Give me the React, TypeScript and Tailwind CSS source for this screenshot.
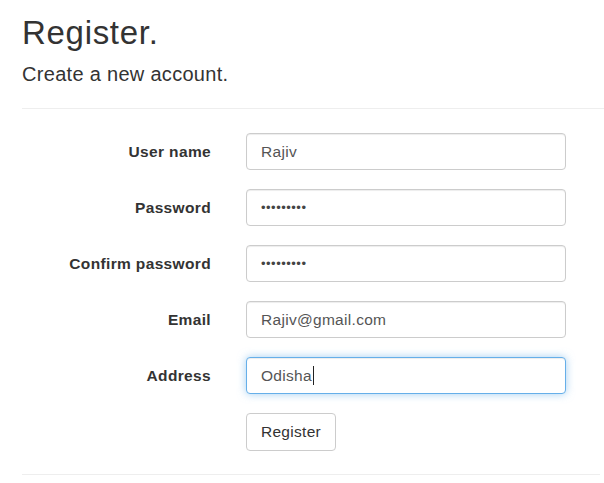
import React from "react";

const fields = [
  { label: "User name", value: "Rajiv" },
  { label: "Password", value: "•••••••••", secret: true },
  { label: "Confirm password", value: "•••••••••", secret: true },
  { label: "Email", value: "Rajiv@gmail.com" },
  { label: "Address", value: "Odisha", focused: true },
];

function Field({ label, value, secret, focused }: { label: string; value: string; secret?: boolean; focused?: boolean }) {
  return (
    <div className="flex items-center">
      <label className="w-[189px] text-right text-[15.5px] font-bold tracking-[0.35px] text-[#333]">{label}</label>
      <div
        className={
          focused
            ? "ml-[35px] flex h-[37px] w-[320px] items-center rounded-[4px] border border-[#66afe9] bg-white px-[14px] text-[15.5px] tracking-[0.3px] text-[#555] shadow-[inset_0_1px_1px_rgba(0,0,0,0.075),0_0_8px_rgba(102,175,233,0.6)]"
            : "ml-[35px] flex h-[37px] w-[320px] items-center rounded-[4px] border border-[#ccc] bg-white px-[14px] text-[15.5px] tracking-[0.3px] text-[#555] shadow-[inset_0_1px_1px_rgba(0,0,0,0.075)]"
        }
      >
        {secret ? (
          <span className="text-[13px] tracking-[0.5px] text-[#444]">{value}</span>
        ) : (
          <span>{value}</span>
        )}
        {focused && <span className="ml-[1px] h-[19px] w-px bg-[#222]" />}
      </div>
    </div>
  );
}

export default function App() {
  return (
    <div
      className="h-[483px] w-[604px] overflow-hidden bg-white pl-[22px] pt-[16px]"
      style={{ fontFamily: '"Liberation Sans", Arial, sans-serif' }}
    >
      <h2 className="m-0 text-[33px] leading-[33px] font-normal tracking-[0.7px] text-[#333]">Register.</h2>
      <h4 className="mt-[15px] text-[20px] leading-[20px] font-normal tracking-[0.3px] text-[#333]">
        Create a new account.
      </h4>
      <hr className="mt-[24px] border-t border-[#eee]" />

      <div className="mt-[24px] flex flex-col gap-[19px]">
        {fields.map((f) => (
          <Field key={f.label} {...f} />
        ))}
        <div className="flex">
          <div className="w-[189px]" />
          <button className="ml-[35px] h-[38px] w-[90px] rounded-[4px] border border-[#ccc] bg-white text-[15.5px] tracking-[0.3px] text-[#333]">
            Register
          </button>
        </div>
      </div>

      <hr className="mr-[4px] mt-[23px] border-t border-[#eee]" />
    </div>
  );
}
